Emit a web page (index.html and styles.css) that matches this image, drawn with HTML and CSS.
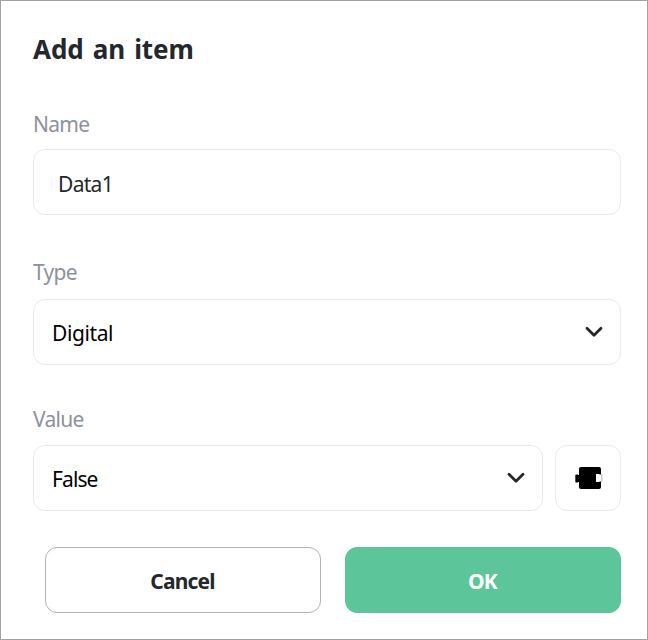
FILE: index.html
```html
<!DOCTYPE html>
<html lang="en">
<head>
  <meta charset="UTF-8">
  <meta name="viewport" content="width=device-width, initial-scale=1">
  <title>Add an item</title>
  <link rel="stylesheet" href="styles.css">
</head>
<body>
  <form class="dialog">
    <h2>Add an item</h2>
    <div class="field">
      <label for="name">Name</label>
      <input type="text" id="name" class="box" value="Data1" autocomplete="off">
    </div>
    <div class="field field-type">
      <label id="type-label">Type</label>
      <button type="button" class="box select" aria-labelledby="type-label">
        <span>Digital</span>
        <svg class="arrow" viewBox="0 0 18 12"><path d="M2 2.2l7 7 7-7"/></svg>
      </button>
    </div>
    <div class="field field-value">
      <label id="value-label">Value</label>
      <div class="value-row">
        <button type="button" class="box select short" aria-labelledby="value-label">
          <span>False</span>
          <svg class="arrow" viewBox="0 0 18 12"><path d="M2 2.2l7 7 7-7"/></svg>
        </button>
        <button type="button" class="box plugin" aria-label="Plugin">
          <svg viewBox="0 0 28 22">
            <path d="M6 0h18q2 0 2 2v5.5h-1.6V7H21v8h3.4v-.5H26V20q0 2-2 2H6q-2 0-2-2v-5H3v.6H1.5Q.3 15.6.3 14.400V8.600Q.3 7.400 1.500 7.400H3V8h1V2q0-2 2-2z"/>
            <path class="tab" d="M25.500 7.500h.600q.900 0 .900 1v5q0 1-.900 1h-.600"/>
          </svg>
        </button>
      </div>
    </div>
    <div class="actions">
      <button type="button" class="btn cancel">Cancel</button>
      <button type="submit" class="btn ok">OK</button>
    </div>
  </form>
</body>
</html>
```

FILE: styles.css
```css
:root {
  --text: #24272c;
  --label: #8c929b;
  --border: #e9eaec;
  --green: #5cc59a;
}
* {
  box-sizing: border-box;
  margin: 0;
  padding: 0;
}
body {
  font-family: "Noto Sans", "Open Sans", sans-serif;
  background: #fff;
}
.dialog {
  height: 640px;
  border: 1px solid #a0a0a0;
  padding: 30px 26px 0 32px;
}
h2 {
  font-size: 26px;
  font-weight: 700;
  line-height: 36px;
  letter-spacing: -0.1px;
  word-spacing: 2.5px;
  color: var(--text);
  margin-bottom: 42px;
}
.field {
  margin-bottom: 42px;
}
.field-type {
  margin-bottom: 39px;
}
.field-value {
  margin-bottom: 36px;
}
label {
  display: block;
  font-size: 21px;
  line-height: 30px;
  letter-spacing: -0.7px;
  color: var(--label);
  margin-bottom: 10px;
}
.field-type label {
  margin-bottom: 12px;
}
.field-value label {
  margin-bottom: 11px;
}
.box {
  display: flex;
  align-items: center;
  width: 100%;
  height: 66px;
  border: 1px solid var(--border);
  border-radius: 12px;
  background: #fff;
  font-family: inherit;
  font-size: 21px;
  letter-spacing: -0.4px;
  outline: none;
}
input.box {
  padding: 3px 24px 0;
  letter-spacing: -0.7px;
  color: var(--text);
}
.select {
  justify-content: space-between;
  padding: 2px 17px 0 18px;
  color: #000;
}
.short {
  letter-spacing: -0.9px;
}
.arrow {
  width: 18px;
  height: 12px;
  margin-bottom: 3px;
  fill: none;
  stroke: var(--text);
  stroke-width: 2.8;
  stroke-linecap: round;
  stroke-linejoin: round;
}
.value-row {
  display: flex;
  gap: 12px;
}
.plugin {
  flex: none;
  width: 66px;
  justify-content: center;
  padding-left: 1px;
}
.plugin svg {
  width: 28px;
  height: 22px;
}
.tab {
  fill: none;
  stroke: #999;
  stroke-width: 0.8;
}
.actions {
  display: flex;
  gap: 24px;
  padding-left: 12px;
}
.btn {
  flex: 1;
  height: 66px;
  border: 1px solid #adb2bb;
  border-radius: 12px;
  font-family: inherit;
  font-size: 21px;
  font-weight: 700;
  letter-spacing: -0.8px;
  padding: 2px 1px 0 0;
}
.cancel {
  background: #fff;
  color: var(--text);
}
.ok {
  background: var(--green);
  border-color: var(--green);
  color: #fff;
}
```
